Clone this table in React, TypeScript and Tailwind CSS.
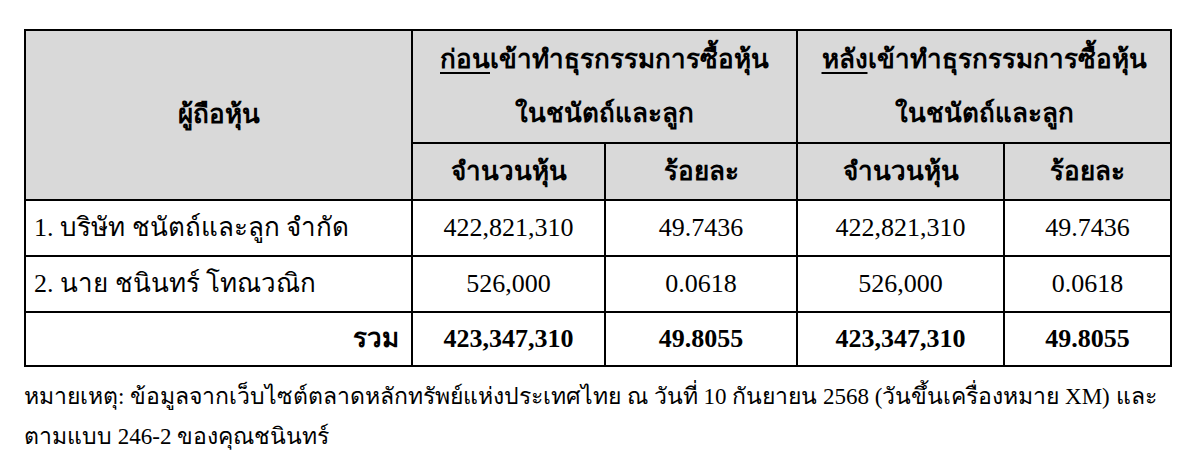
export default function App() {
  const rows = [
    { name: '1. บริษัท ชนัตถ์และลูก จำกัด', before: '422,821,310', beforePct: '49.7436', after: '422,821,310', afterPct: '49.7436' },
    { name: '2. นาย ชนินทร์ โทณวณิก', before: '526,000', beforePct: '0.0618', after: '526,000', afterPct: '0.0618' },
  ]

  const cell = 'border-2 border-black'
  const head = 'border-2 border-black bg-[#d9d9d9] font-bold text-center'

  return (
    <div className="h-[465px] w-[1200px] overflow-hidden bg-white pl-[24px] pt-[29px] text-black [font-family:'Liberation_Serif',serif]">
      <table className="table-fixed border-collapse text-[26px] leading-none">
        <colgroup>
          <col className="w-[387px]" />
          <col className="w-[193px]" />
          <col className="w-[192px]" />
          <col className="w-[207px]" />
          <col className="w-[167px]" />
        </colgroup>
        <thead>
          <tr className="h-[113px]">
            <th rowSpan={2} className={head}>ผู้ถือหุ้น</th>
            <th colSpan={2} className={`${head} leading-[54px]`}>
              <span className="underline underline-offset-4">ก่อน</span>เข้าทำธุรกรรมการซื้อหุ้น
              <br />
              ในชนัตถ์และลูก
            </th>
            <th colSpan={2} className={`${head} leading-[54px]`}>
              <span className="underline underline-offset-4">หลัง</span>เข้าทำธุรกรรมการซื้อหุ้น
              <br />
              ในชนัตถ์และลูก
            </th>
          </tr>
          <tr className="h-[57px]">
            <th className={head}>จำนวนหุ้น</th>
            <th className={head}>ร้อยละ</th>
            <th className={head}>จำนวนหุ้น</th>
            <th className={head}>ร้อยละ</th>
          </tr>
        </thead>
        <tbody>
          {rows.map((r) => (
            <tr key={r.name} className="h-[56px]">
              <td className={`${cell} px-[8px] text-left`}>{r.name}</td>
              <td className={`${cell} text-center`}>{r.before}</td>
              <td className={`${cell} text-center`}>{r.beforePct}</td>
              <td className={`${cell} text-center`}>{r.after}</td>
              <td className={`${cell} text-center`}>{r.afterPct}</td>
            </tr>
          ))}
          <tr className="h-[54px] font-bold">
            <td className={`${cell} pr-[12px] text-right`}>รวม</td>
            <td className={`${cell} text-center`}>423,347,310</td>
            <td className={`${cell} text-center`}>49.8055</td>
            <td className={`${cell} text-center`}>423,347,310</td>
            <td className={`${cell} text-center`}>49.8055</td>
          </tr>
        </tbody>
      </table>
      <p className="mt-[10px] whitespace-nowrap text-[23px] leading-[40px]">
        หมายเหตุ: ข้อมูลจากเว็บไซต์ตลาดหลักทรัพย์แห่งประเทศไทย ณ วันที่ 10 กันยายน 2568 (วันขึ้นเครื่องหมาย XM) และ
        <br />
        ตามแบบ 246-2 ของคุณชนินทร์
      </p>
    </div>
  )
}
